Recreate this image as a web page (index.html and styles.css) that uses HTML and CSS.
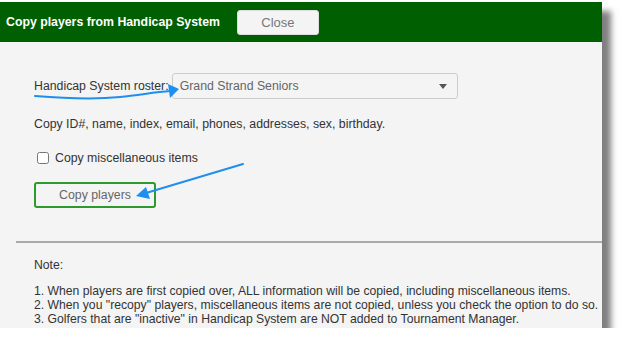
FILE: index.html
```html
<!DOCTYPE html>
<html lang="en">
<head>
  <meta charset="UTF-8" />
  <title>Copy players from Handicap System</title>
  <link rel="stylesheet" href="styles.css">
</head>
<body>
  <div class="dialog">
    <div class="dlg-head">
      <span class="dlg-title">Copy players from Handicap System</span>
      <button class="btn-close">Close</button>
    </div>
    <div class="dlg-body">
      <div class="roster-row">
        <label class="roster-label">Handicap System roster:</label>
        <div class="select">Grand Strand Seniors<span class="caret"></span></div>
      </div>
      <p class="copy-desc">Copy ID#, name, index, email, phones, addresses, sex, birthday.</p>
      <label class="chk"><input type="checkbox"> Copy miscellaneous items</label>
      <button class="btn-copy">Copy players</button>
    </div>
    <hr class="sep">
    <div class="notes">
      <p class="note-title">Note:</p>
      <p>1. When players are first copied over, ALL information will be copied, including miscellaneous items.</p>
      <p>2. When you "recopy" players, miscellaneous items are not copied, unless you check the option to do so.</p>
      <p>3. Golfers that are "inactive" in Handicap System are NOT added to Tournament Manager.</p>
    </div>
    <!-- annotation arrows drawn over the screenshot -->
    <svg class="annot" width="602" height="326" viewBox="0 2 602 326">
      <path d="M35 96 C60 98 90 100 120 97 C140 95 155 92 170 91" fill="none" stroke="#1f8fef" stroke-width="2" stroke-linecap="round"/>
      <polygon points="179,89 168,84 170,98" fill="#1f8fef"/>
      <path d="M243 164 L146 193" fill="none" stroke="#1f8fef" stroke-width="2" stroke-linecap="round"/>
      <polygon points="136,196 146,187 150,199" fill="#1f8fef"/>
    </svg>
  </div>
</body>
</html>
```

FILE: styles.css
```css
body {
  margin: 0;
  padding-top: 2px;
  background: #fff;
  font-family: 'Liberation Sans', Arial, sans-serif;
  color: #333;
}
.dialog {
  position: relative;
  width: 602px;
  height: 326px;
  background: #f4f4f4;
  box-shadow: 9px 9px 6px rgba(0, 0, 0, 0.5);
}
.dlg-head {
  display: flex;
  align-items: center;
  height: 40px;
  padding-left: 6px;
  background: #005f00;
}
.dlg-title {
  font-size: 12.3px;
  font-weight: bold;
  color: #fff;
}
.btn-close {
  margin-left: 17px;
  width: 82px;
  height: 25px;
  font-family: inherit;
  font-size: 13px;
  color: #777;
  background: #f4f4f4;
  border: 1px solid #ddd;
  border-radius: 3px;
}
.dlg-body {
  padding: 31px 0 0 34px;
  display: flex;
  flex-direction: column;
  align-items: flex-start;
}
.roster-row {
  display: flex;
  align-items: center;
}
.roster-label {
  font-size: 12.3px;
  margin-right: 3px;
}
.select {
  position: relative;
  width: 277px;
  height: 24px;
  line-height: 24px;
  padding-left: 7px;
  font-size: 12.3px;
  color: #666;
  border: 1px solid #ccc;
  border-radius: 3px;
}
.caret {
  position: absolute;
  right: 10px;
  top: 10px;
  border-left: 4px solid transparent;
  border-right: 4px solid transparent;
  border-top: 5px solid #555;
}
.copy-desc {
  margin: 17px 0 0;
  font-size: 12.3px;
  line-height: 16px;
}
.chk {
  display: flex;
  align-items: center;
  margin-top: 18px;
  font-size: 12.3px;
  line-height: 16px;
}
.chk input {
  margin: 0 6px 0 3px;
  width: 12px;
  height: 12px;
}
.btn-copy {
  margin-top: 16px;
  width: 122px;
  height: 26px;
  font-family: inherit;
  font-size: 12.3px;
  color: #666;
  background: #f4f4f4;
  border: 2px solid #2c9a2c;
  border-radius: 3px;
}
.sep {
  margin: 33px 0 0 16px;
  border: 0;
  border-top: 2px solid #aaa;
}
.notes {
  padding: 15px 0 0 34px;
  font-size: 12.2px;
  line-height: 14px;
}
.notes p { margin: 0; }
.note-title { margin-bottom: 12px !important; }
.annot {
  position: absolute;
  left: 0;
  top: 0;
  pointer-events: none;
}
```
